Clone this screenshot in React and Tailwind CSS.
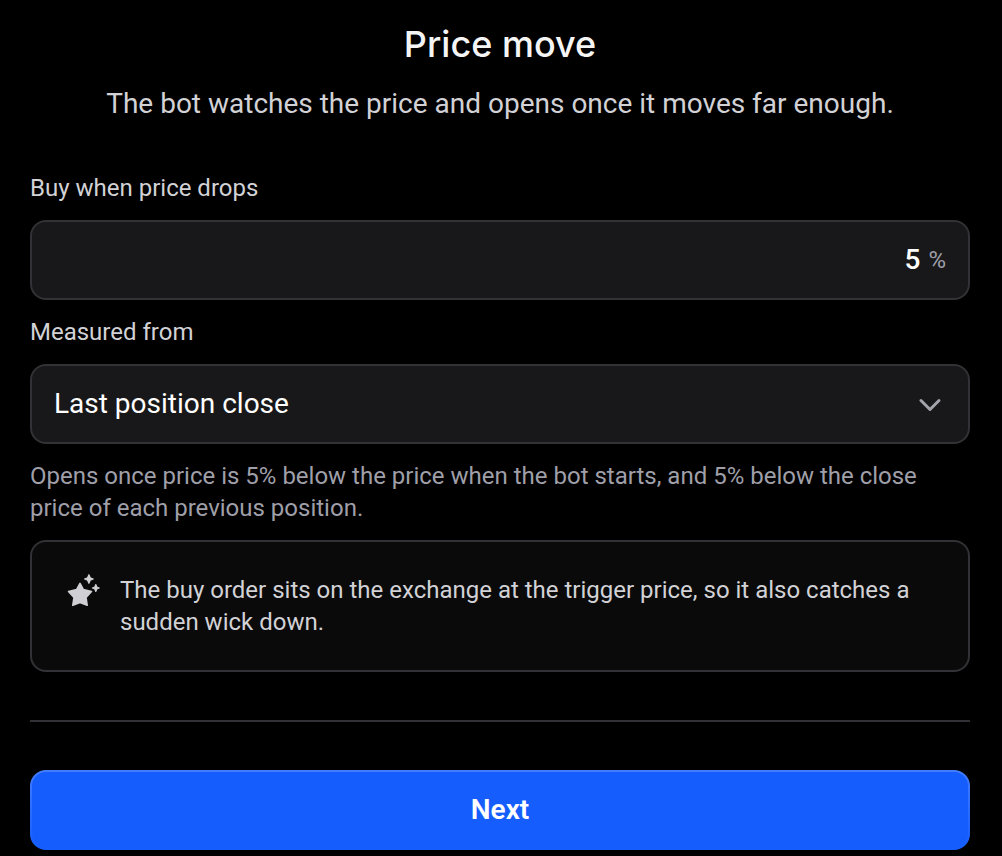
import { useState } from "react";

function StarsIcon() {
  return (
    <svg viewBox="0 0 40 40" className="size-10 shrink-0 text-[#cfcfd4]" fill="currentColor" stroke="currentColor" strokeWidth="1.6" strokeLinejoin="round" aria-hidden="true">
      <path d="M16 9.4 L19.4 15.6 L27.5 17.5 L22 23.4 L23.2 31.3 L16 28.6 L8.8 31.3 L10 23.4 L4.5 17.5 L12.6 15.6 Z" />
      <path strokeWidth="1.2" d="M24.9 0.7 L26.2 3.7 L29.2 5 L26.2 6.3 L24.9 9.3 L23.6 6.3 L20.6 5 L23.6 3.7 Z" />
      <path strokeWidth="1.2" d="M31.8 10.6 L32.8 13 L35.2 14 L32.8 15 L31.8 17.4 L30.8 15 L28.4 14 L30.8 13 Z" />
    </svg>
  );
}

export default function App() {
  const [drop, setDrop] = useState("5");
  const [source, setSource] = useState("close");
  return (
    <main className="min-h-screen bg-black pt-6 pr-8 pb-1.5 pl-[30px] font-['Roboto',sans-serif] text-2xl text-[#d2d2d6]">
      <header className="text-center">
        <h1 className="font-['Inter',sans-serif] text-4xl leading-10 font-medium text-[#f5f5f5]">Price move</h1>
        <p className="mt-5 text-[28px] leading-10">The bot watches the price and opens once it moves far enough.</p>
      </header>
      <form className="mt-12" onSubmit={(e) => e.preventDefault()}>
        <label htmlFor="drop" className="block leading-8">Buy when price drops</label>
        <div className="mt-4 flex h-20 items-center gap-2 rounded-2xl border-2 border-[#313136] bg-[#18181a] px-[22px]">
          <input id="drop" inputMode="decimal" value={drop} onChange={(e) => setDrop(e.target.value)} className="min-w-0 flex-1 bg-transparent text-right text-[28px] font-medium text-white outline-none" />
          <span className="text-[#9f9fa9]">%</span>
        </div>
        <label htmlFor="source" className="mt-4 block leading-8">Measured from</label>
        <div className="mt-4 grid items-center">
          <select id="source" value={source} onChange={(e) => setSource(e.target.value)} className="col-start-1 row-start-1 h-20 w-full appearance-none rounded-2xl border-2 border-[#313136] bg-[#18181a] px-[22px] text-[28px] text-white outline-none">
            <option value="close">Last position close</option>
          </select>
          <svg viewBox="0 0 24 24" className="pointer-events-none col-start-1 row-start-1 mr-7 size-6 justify-self-end text-[#a3a3ab]" fill="none" stroke="currentColor" strokeWidth="3" strokeLinecap="round" strokeLinejoin="round" aria-hidden="true">
            <path d="M3 8.5 L12 17.5 L21 8.5" />
          </svg>
        </div>
        <p className="mt-4 leading-8 text-[#9f9fa9]">Opens once price is 5% below the price when the bot starts, and 5% below the close price of each previous position.</p>
        <aside className="mt-4 flex gap-4 rounded-2xl border-2 border-[#313136] bg-[#0a0a0a] px-8 py-8">
          <StarsIcon />
          <p className="leading-8">The buy order sits on the exchange at the trigger price, so it also catches a sudden wick down.</p>
        </aside>
        <hr className="mt-12 border-t-2 border-[#313136]" />
        <button type="submit" className="mt-12 h-20 w-full rounded-2xl border-2 border-transparent [background:linear-gradient(#155dfc,#155dfc)_padding-box,linear-gradient(#447dff,#155dfc)_border-box] text-[28px] font-semibold text-white">Next</button>
      </form>
    </main>
  );
}
